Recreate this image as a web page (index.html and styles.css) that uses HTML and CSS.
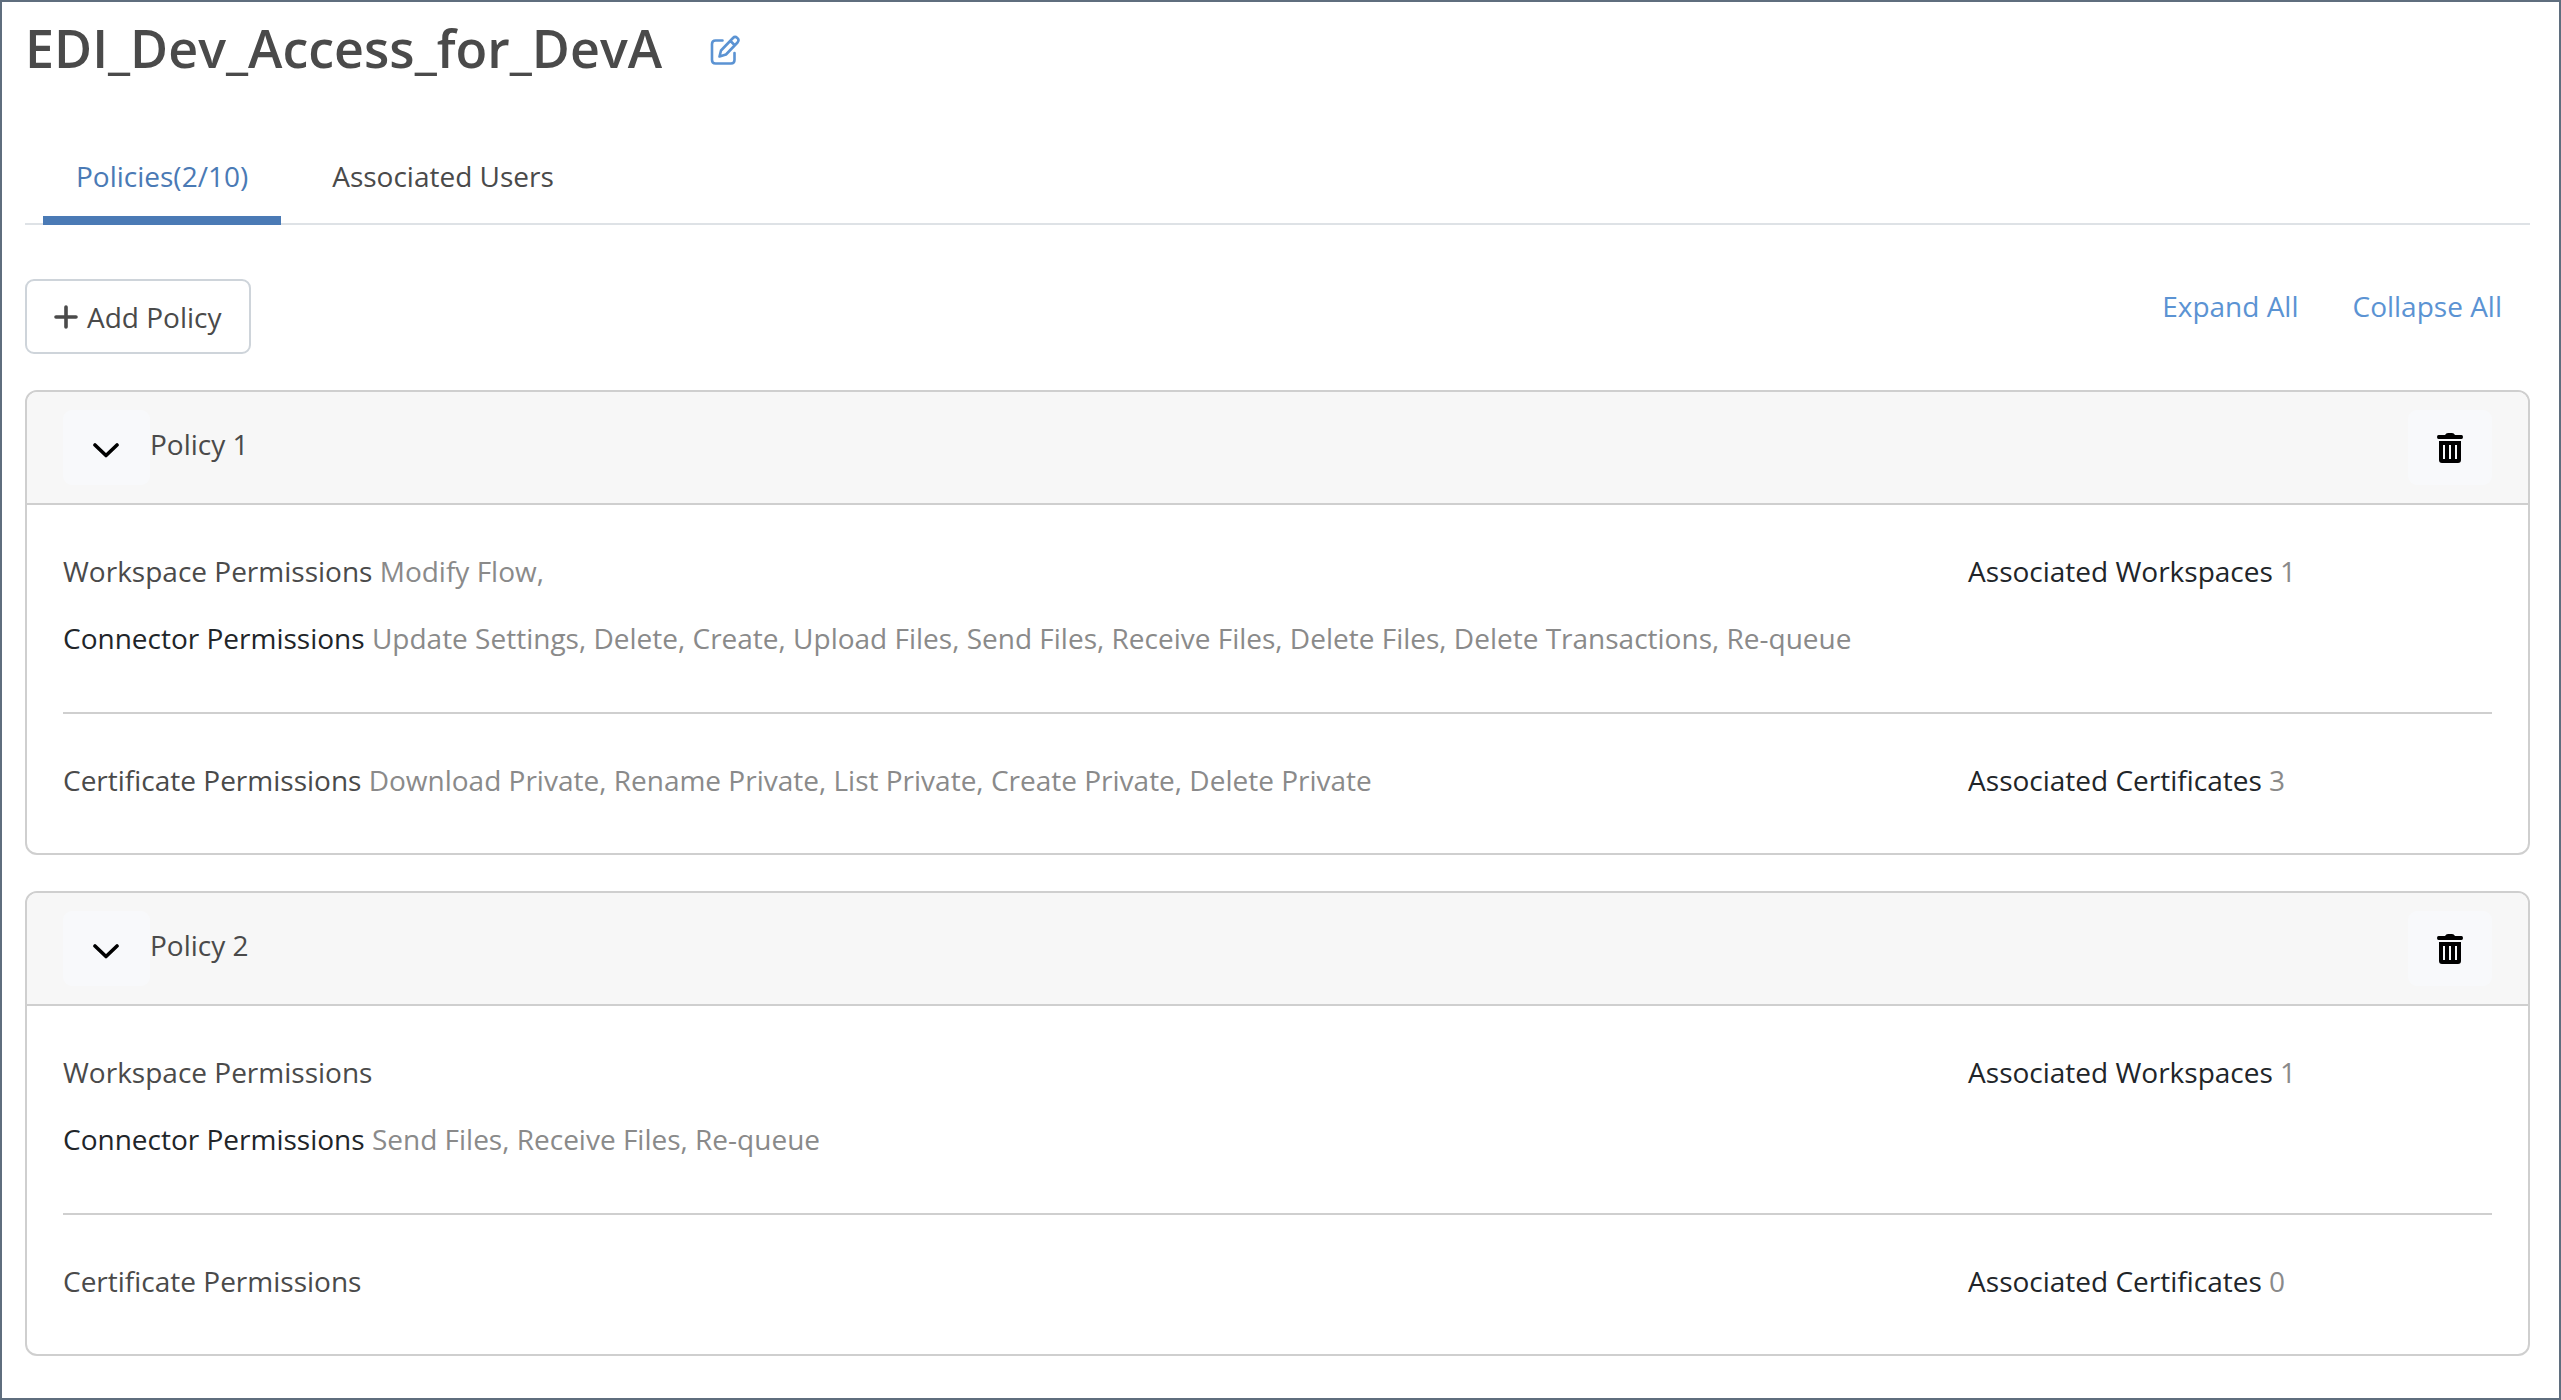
FILE: index.html
```html
<!DOCTYPE html>
<html lang="en">
  <head>
    <meta charset="UTF-8" />
    <meta name="viewport" content="width=device-width, initial-scale=1.0" />
    <title>EDI_Dev_Access_for_DevA</title>
    <link rel="stylesheet" href="styles.css">
  </head>
  <body>
    <!-- shared icons -->
    <svg class="sprite" aria-hidden="true">
      <symbol id="icon-chevron" viewBox="0 0 26 15">
        <path d="M2 2l11 10.500L24 2" fill="none" stroke="currentColor" stroke-width="3.600" stroke-linecap="round" stroke-linejoin="round" />
      </symbol>
      <symbol id="icon-trash" viewBox="0 0 26 30">
        <path fill="currentColor" fill-rule="evenodd" d="M8 2Q9 0 11 0h4q2 0 3 2h6.500Q26 2 26 4T24.500 6h-23Q0 6 0 4T1.500 2zM2 8h22v19q0 3-3 3H5q-3 0-3-3zM6 12v14h2V12zM12 12v14h2V12zM18 12v14h2V12z" />
      </symbol>
    </svg>

    <main class="page">
      <header class="title">
        <h1>EDI_Dev_Access_for_DevA</h1>
        <button type="button" class="edit" aria-label="Edit name">
          <svg viewBox="0 0 30 30" width="30" height="30" fill="none" stroke="currentColor" stroke-width="2.600" stroke-linecap="round" stroke-linejoin="round">
            <path d="M12.500 5.500H5.500Q2 5.500 2 9V25Q2 28.500 5.500 28.500H21Q24.500 28.500 24.500 25V18" />
            <path d="M9.500 21.500L11 15.500L23 3Q25 1 27.300 2.900T27.500 7.500L16 19.500ZM20.500 6L24.500 10" />
          </svg>
        </button>
      </header>

      <nav class="tabs">
        <a href="#policies" class="tab active">Policies(2/10)</a>
        <a href="#users" class="tab">Associated Users</a>
      </nav>

      <div class="toolbar">
        <button type="button" class="btn">
          <svg viewBox="0 0 24 24" width="24" height="24" fill="none" stroke="currentColor" stroke-width="3.600" stroke-linecap="round">
            <path d="M12 2v20M2 12h20" />
          </svg>
          Add Policy
        </button>
        <div class="links">
          <a href="#expand">Expand All</a>
          <a href="#collapse">Collapse All</a>
        </div>
      </div>

      <section class="card">
        <div class="card-header">
          <button type="button" class="icon-btn toggle" aria-label="Toggle Policy 1">
            <svg width="26" height="15"><use href="#icon-chevron" /></svg>
          </button>
          <h2>Policy 1</h2>
          <button type="button" class="icon-btn delete" aria-label="Delete Policy 1">
            <svg width="26" height="30"><use href="#icon-trash" /></svg>
          </button>
        </div>
        <div class="card-body">
          <div class="row">
            <div class="col">
              <p><span class="label">Workspace Permissions</span> Modify Flow,</p>
              <p><span class="label dark">Connector Permissions</span> Update Settings, Delete, Create, Upload Files, Send Files, Receive Files, Delete Files, Delete Transactions, Re-queue</p>
            </div>
            <div class="col">
              <p><span class="label dark">Associated Workspaces</span> 1</p>
            </div>
          </div>
          <hr />
          <div class="row">
            <div class="col">
              <p><span class="label">Certificate Permissions</span> Download Private, Rename Private, List Private, Create Private, Delete Private</p>
            </div>
            <div class="col">
              <p><span class="label dark">Associated Certificates</span> 3</p>
            </div>
          </div>
        </div>
      </section>

      <section class="card">
        <div class="card-header">
          <button type="button" class="icon-btn toggle" aria-label="Toggle Policy 2">
            <svg width="26" height="15"><use href="#icon-chevron" /></svg>
          </button>
          <h2>Policy 2</h2>
          <button type="button" class="icon-btn delete" aria-label="Delete Policy 2">
            <svg width="26" height="30"><use href="#icon-trash" /></svg>
          </button>
        </div>
        <div class="card-body">
          <div class="row">
            <div class="col">
              <p><span class="label">Workspace Permissions</span></p>
              <p><span class="label dark">Connector Permissions</span> Send Files, Receive Files, Re-queue</p>
            </div>
            <div class="col">
              <p><span class="label dark">Associated Workspaces</span> 1</p>
            </div>
          </div>
          <hr />
          <div class="row">
            <div class="col">
              <p><span class="label">Certificate Permissions</span></p>
            </div>
            <div class="col">
              <p><span class="label dark">Associated Certificates</span> 0</p>
            </div>
          </div>
        </div>
      </section>
    </main>
  </body>
</html>
```
FILE: styles.css
```css
:root {
  --main-font: "Segoe UI", "Open Sans", "Noto Sans", sans-serif;
  --text: #4a4a4a;
  --text-dark: #212529;
  --text-muted: #8a8a8a;
  --link: #5b93d3;
  --active: #4a7ab5;
  --border: #cfcfcf;
}
*,
*::after,
*::before {
  box-sizing: border-box;
  margin: 0;
}
body {
  font-family: var(--main-font);
  font-size: 28px;
  line-height: 44px;
  color: var(--text);
  background: white;
}
a {
  color: var(--link);
  text-decoration: none;
}
button {
  font: inherit;
  color: inherit;
  cursor: pointer;
}
svg {
  display: block;
}
.sprite {
  display: none;
}
.page {
  min-height: 100vh;
  border: 2px solid #5f6e7e;
  padding: 10px 29px 6px 23px;
}

/* title */
.title {
  display: flex;
  align-items: center;
  gap: 44px;
}
h1 {
  font-size: 52px;
  line-height: 72px;
  font-weight: 600;
}
.edit {
  border: 0;
  padding: 8px 4px 4px;
  background: none;
  color: var(--link);
}

/* tabs */
.tabs {
  display: flex;
  gap: 18px;
  margin-top: 56px;
  padding-left: 18px;
  border-bottom: 2px solid #dee2e6;
}
.tab {
  padding: 14px 33px 18px;
  margin-bottom: -2px;
  border-bottom: 9px solid transparent;
  color: var(--text);
}
.tab.active {
  color: var(--active);
  border-bottom-color: var(--active);
}

/* toolbar */
.toolbar {
  display: flex;
  justify-content: space-between;
  align-items: flex-start;
  margin: 54px 0 36px;
}
.btn {
  display: flex;
  align-items: center;
  gap: 9px;
  padding: 14px 27px 13px;
  border: 2px solid #ced4da;
  border-radius: 9px;
  background: white;
}
.links {
  display: flex;
  gap: 54px;
  padding: 5px 28px 0 0;
}

/* policy cards */
.card {
  margin-bottom: 36px;
  border: 2px solid var(--border);
  border-radius: 12px;
  overflow: hidden;
}
.card-header {
  display: flex;
  align-items: flex-start;
  padding: 18px 36px;
  border-bottom: 2px solid var(--border);
  background: #f7f7f7;
}
h2 {
  padding-top: 12px;
  font-size: 28px;
  line-height: 44px;
  font-weight: 400;
}
.icon-btn {
  display: flex;
  align-items: center;
  justify-content: center;
  height: 75px;
  padding: 0 29px;
  border: 0;
  border-radius: 9px;
  background: #f8f9fb;
  color: black;
}
.toggle {
  padding: 5px 31px 0 30px;
}
.delete {
  margin-left: auto;
}
.card-body {
  padding: 44px 36px 51px;
}
.row {
  display: grid;
  grid-template-columns: 40fr 11fr;
}
.col {
  display: flex;
  flex-direction: column;
  gap: 23px;
  color: var(--text-muted);
}
.label {
  color: var(--text);
}
.dark {
  color: var(--text-dark);
}
hr {
  margin: 52px 0 44px;
  border: 0;
  border-top: 2px solid var(--border);
}
```
